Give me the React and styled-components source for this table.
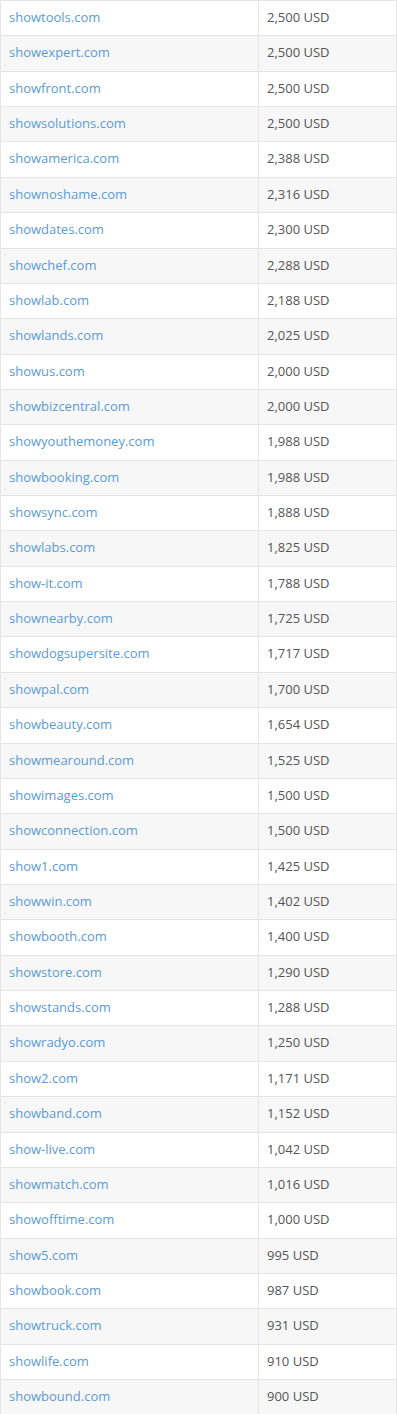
import React from 'react';
import styled, { createGlobalStyle } from 'styled-components';

const GlobalStyle = createGlobalStyle`
    body {
        margin: 0;
        background: #fff;
        font-family: "Open Sans", "Liberation Sans", sans-serif;
    }
`;

const domains = [
    ['showtools.com', '2,500 USD'],
    ['showexpert.com', '2,500 USD'],
    ['showfront.com', '2,500 USD'],
    ['showsolutions.com', '2,500 USD'],
    ['showamerica.com', '2,388 USD'],
    ['shownoshame.com', '2,316 USD'],
    ['showdates.com', '2,300 USD'],
    ['showchef.com', '2,288 USD'],
    ['showlab.com', '2,188 USD'],
    ['showlands.com', '2,025 USD'],
    ['showus.com', '2,000 USD'],
    ['showbizcentral.com', '2,000 USD'],
    ['showyouthemoney.com', '1,988 USD'],
    ['showbooking.com', '1,988 USD'],
    ['showsync.com', '1,888 USD'],
    ['showlabs.com', '1,825 USD'],
    ['show-it.com', '1,788 USD'],
    ['shownearby.com', '1,725 USD'],
    ['showdogsupersite.com', '1,717 USD'],
    ['showpal.com', '1,700 USD'],
    ['showbeauty.com', '1,654 USD'],
    ['showmearound.com', '1,525 USD'],
    ['showimages.com', '1,500 USD'],
    ['showconnection.com', '1,500 USD'],
    ['show1.com', '1,425 USD'],
    ['showwin.com', '1,402 USD'],
    ['showbooth.com', '1,400 USD'],
    ['showstore.com', '1,290 USD'],
    ['showstands.com', '1,288 USD'],
    ['showradyo.com', '1,250 USD'],
    ['show2.com', '1,171 USD'],
    ['showband.com', '1,152 USD'],
    ['show-live.com', '1,042 USD'],
    ['showmatch.com', '1,016 USD'],
    ['showofftime.com', '1,000 USD'],
    ['show5.com', '995 USD'],
    ['showbook.com', '987 USD'],
    ['showtruck.com', '931 USD'],
    ['showlife.com', '910 USD'],
    ['showbound.com', '900 USD'],
];

const PriceTable = styled.table`
    width: 397px;
    border-collapse: collapse;
    border: 1px solid #e6e6e6;
    font-size: 13px;
    color: #555;
`;

const Row = styled.tr`
    background: ${(p) => (p.$striped ? '#f7f7f7' : '#fff')};
`;

const Cell = styled.td`
    padding: 7px 8px 9px;
    line-height: 18.36px;
    border: 1px solid #e6e6e6;
    text-align: left;
    vertical-align: top;
    width: ${(p) => p.$width || 'auto'};
`;

const DomainLink = styled.a`
    color: #5b9bd5;
    text-decoration: none;
`;

export default function App() {
    return (
        <>
            <GlobalStyle />
            <PriceTable>
                <tbody>
                    {domains.map(([name, price], i) => (
                        <Row key={name} $striped={i % 2 === 1}>
                            <Cell $width="241px">
                                <DomainLink href="#">{name}</DomainLink>
                            </Cell>
                            <Cell>{price}</Cell>
                        </Row>
                    ))}
                </tbody>
            </PriceTable>
        </>
    );
}
